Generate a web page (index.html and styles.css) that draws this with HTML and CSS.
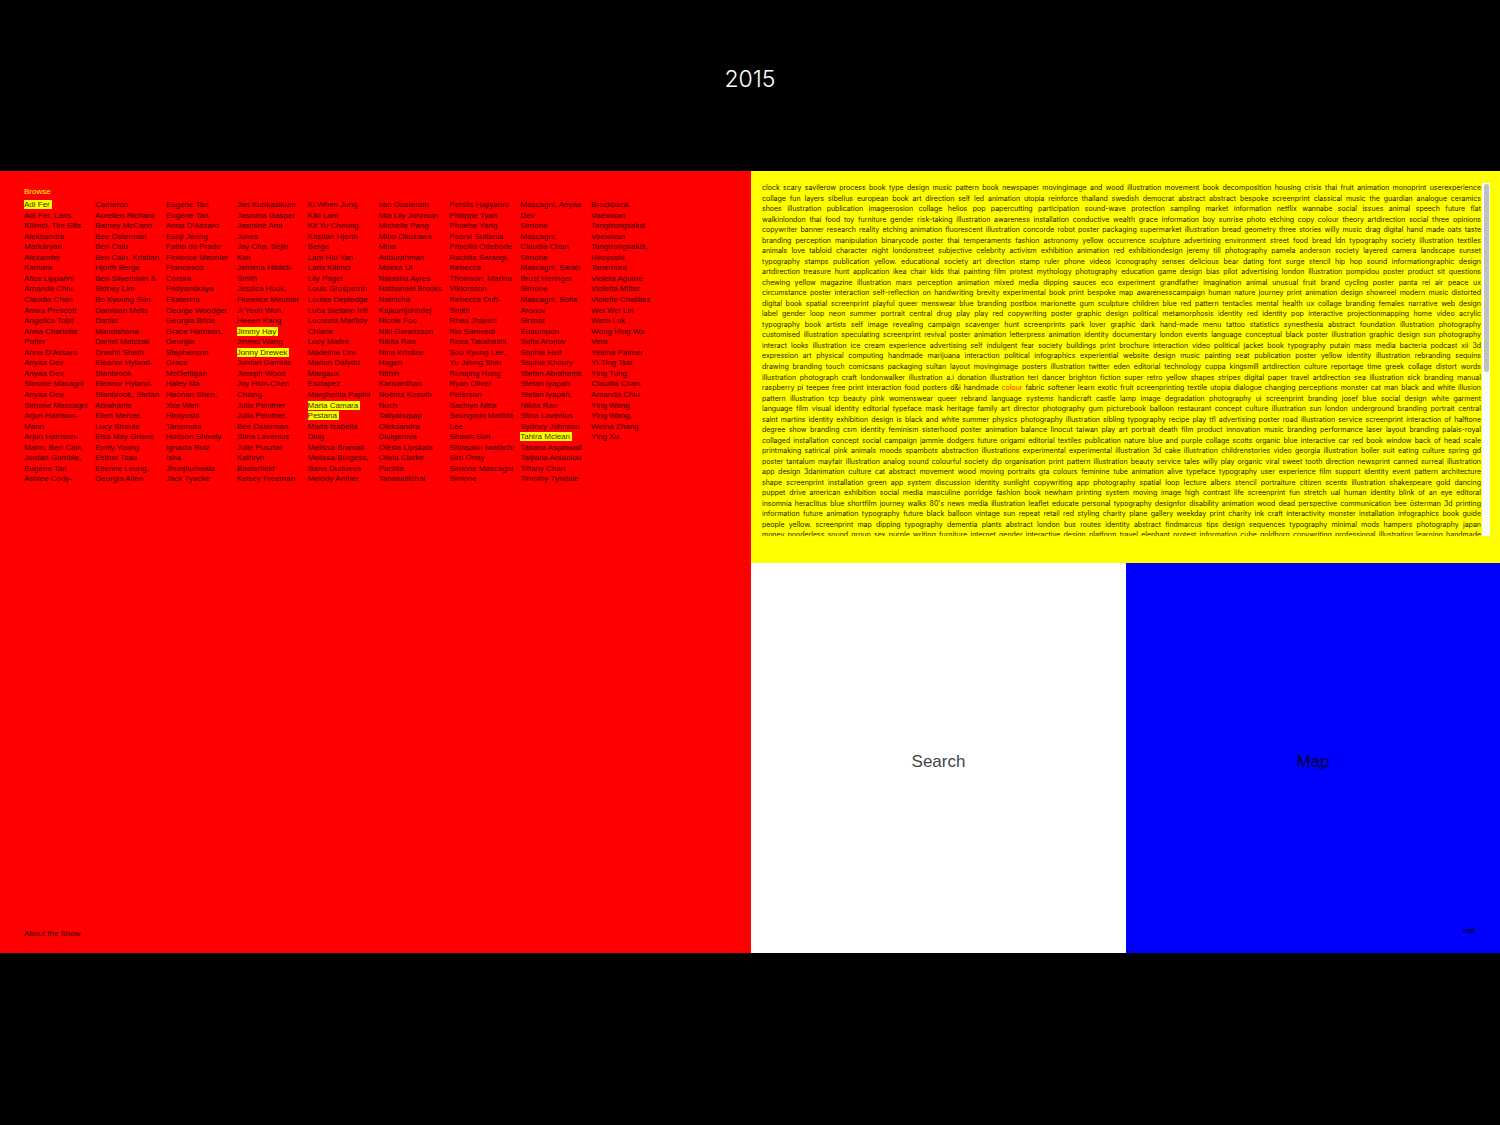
FILE: index.html
```html
<!DOCTYPE html>
<html lang="en">
<head>
<meta charset="utf-8">
<meta name="viewport" content="width=device-width, initial-scale=1">
<title>2015</title>
<link rel="stylesheet" href="styles.css">
</head>
<body>
<header class="year"><h1>2015</h1></header>
<main class="board">
<section class="browse">
<h2 class="browse-title"><a href="#browse">Browse</a></h2>
<div class="names">
<ul>
<li><mark>Adi Fer</mark></li><li>Adi Fer, Laris</li><li>Kilimci, Tim Ellis</li><li>Aleksandra</li><li>Markaryan</li><li>Alexander</li><li>Kamara</li><li>Alice Lipparini</li><li>Amanda Chiu,</li><li>Claudia Chan</li><li>Amira Prescott</li><li>Angelica Tobit</li><li>Anna Charlotte</li><li>Potter</li><li>Anna D'Assaro</li><li>Anyaa Dev</li><li>Anyaa Dev,</li><li>Simone Macagni</li><li>Anyaa Dev,</li><li>Simone Mascagni</li><li>Arjun Harrison-</li><li>Mann</li><li>Arjun Harrison-</li><li>Mann, Ben Cain,</li><li>Jordan Gamble,</li><li>Eugene Tan</li><li>Ashlee Cody-</li>
</ul>
<ul>
<li>Cameron</li><li>Aurelien Richard</li><li>Barney McCann</li><li>Bee Österman</li><li>Ben Cain</li><li>Ben Cain, Kristian</li><li>Hjorth Berge</li><li>Ben Silvertown &amp;</li><li>Sidney Lim</li><li>Bo Kyoung Son</li><li>Damiaan Melis</li><li>Daniel</li><li>Mandishona</li><li>Daniel Matczak</li><li>Drashti Sheth</li><li>Eleanor Hyland-</li><li>Stanbrook</li><li>Eleanor Hyland-</li><li>Stanbrook, Stefan</li><li>Abrahams</li><li>Ellen Mercer,</li><li>Lucy Streule</li><li>Elsa May Grieve</li><li>Emily Young</li><li>Esther Tsao</li><li>Etienne Leung,</li><li>Georgia Allen</li>
</ul>
<ul>
<li>Eugene Tan</li><li>Eugene Tan,</li><li>Anna D'Assaro</li><li>Eunji Jeong</li><li>Fabio do Prado</li><li>Florence Meunier</li><li>Francesco</li><li>Corsini</li><li>Fridyanskaya</li><li>Ekaterina</li><li>George Woodger</li><li>Georgia Bride</li><li>Grace Harrison,</li><li>Georgia</li><li>Stephenson</li><li>Grace</li><li>McGettigan</li><li>Haley Ma</li><li>Haonan Shen,</li><li>Xue Wen</li><li>Hiroyoshi</li><li>Tanemura</li><li>Hudson Shively</li><li>Ignacia Ruiz</li><li>Isha</li><li>Jhunjhunwala</li><li>Jack Tyacke</li>
</ul>
<ul>
<li>Jan Kunkasikum</li><li>Jasmina Gasper</li><li>Jasmine Ami</li><li>Jones</li><li>Jay Cha, Sejin</li><li>Kim</li><li>Jemima Hildick-</li><li>Smith</li><li>Jessica Hook,</li><li>Florence Meunier</li><li>Ji Yeon Won,</li><li>Heeen Kang</li><li><mark>Jimmy Hay</mark></li><li>Jinmei Wang</li><li><mark>Jonny Drewek</mark></li><li>Jordan Gamble</li><li>Joseph Wood</li><li>Joy Hsin-Chen</li><li>Chiang</li><li>Julia Peintner</li><li>Julia Peintner,</li><li>Bee Österman,</li><li>Stina Lavenius</li><li>Julie Pusztai</li><li>Kathryn</li><li>Basterfield</li><li>Kelsey Freeman</li>
</ul>
<ul>
<li>Ki When Jung</li><li>Kiki Lam</li><li>Kit Yu Cheung</li><li>Kristian Hjorth</li><li>Berge</li><li>Lam Hiu Yan</li><li>Laris Kilimci</li><li>Lily Paget</li><li>Louis Grosperrin</li><li>Louise Depledge</li><li>Luca Stefano Iriti</li><li>Lucrezia Marilidy</li><li>Chiarle</li><li>Lucy Maitre</li><li>Madeline Lim</li><li>Manon Dafydd</li><li>Margaux</li><li>Esclapez</li><li>Margherita Papini</li><li><mark>Maria Camara</mark></li><li><mark>Pestana</mark></li><li>Maria Isabella</li><li>Ding</li><li>Melissa Bramall</li><li>Melissa Burgess,</li><li>Iliana Dudueva</li><li>Melody Amber</li>
</ul>
<ul>
<li>van Oosterom</li><li>Mia Lily Johnson</li><li>Michelle Pang</li><li>Miho Okuzawa</li><li>Mina</li><li>Adburahman</li><li>Moeka Ui</li><li>Natasha Ayres</li><li>Nathanael Brooks</li><li>Natnicha</li><li>Kajkumjohndej</li><li>Nicole Foo</li><li>Niki Goransson</li><li>Nikita Rao</li><li>Nina Kristine</li><li>Hagen</li><li>Nithin</li><li>Karivardhan</li><li>Noëma Kosuth</li><li>Nuch</li><li>Tatiyanupap</li><li>Oleksandra</li><li>Diulgerova</li><li>Olesia Lipskaia</li><li>Olivia Clarke</li><li>Pantita</li><li>Tanasatitchai</li>
</ul>
<ul>
<li>Persiis Hajiyanni</li><li>Philippe Tyan</li><li>Phoebe Yang</li><li>Poorvi Sultania</li><li>Priscilla Odebode</li><li>Rachita Saraogi,</li><li>Rebecca</li><li>Thomson, Marina</li><li>Viktorsson</li><li>Rebecca Duff-</li><li>Smith</li><li>Rhea Jhaveri</li><li>Ria Samvedi</li><li>Rosa Takahashi,</li><li>Soo Kyung Lee,</li><li>Yu Jeong Shin</li><li>Runqing Hong</li><li>Ryan Oliver</li><li>Peterson</li><li>Sachiyo Nitta</li><li>Seungmin Matilda</li><li>Lee</li><li>Shawn Soh</li><li>Shinsaku Iwatachi</li><li>Sim Onay</li><li>Simone Mascagni</li><li>Simone</li>
</ul>
<ul>
<li>Mascagni, Anyaa</li><li>Dev</li><li>Simone</li><li>Mascagni,</li><li>Claudia Chan</li><li>Simone</li><li>Mascagni, Sarah</li><li>Brust Heringer</li><li>Simone</li><li>Mascagni, Sofia</li><li>Aronov</li><li>Sininat</li><li>Euaumpon</li><li>Sofia Aronov</li><li>Sophie Helf</li><li>Sophie Khoury</li><li>Stefan Abrahams</li><li>Stefan Iyapah</li><li>Stefan Iyapah,</li><li>Nikita Rao</li><li>Stina Lavenius</li><li>Sydney Johnson</li><li><mark>Tahira Mclean</mark></li><li>Tatiana Aspinwall</li><li>Tatjiana Antoniou</li><li>Tiffany Chan</li><li>Timothy Tyndale</li>
</ul>
<ul>
<li>Brockbank</li><li>Vaewwan</li><li>Tangtrongsakdi</li><li>Vaewwan</li><li>Tangtrongsakdi,</li><li>Hiroyoshi</li><li>Tanemura</li><li>Violeta Aguirre</li><li>Violetta Mitter</li><li>Violette Chatillez</li><li>Wei Wei Lin</li><li>Wern Luk</li><li>Wong Hing Wa</li><li>Vera</li><li>Yelena Palmer</li><li>Yi-Ting Tsai</li><li>Ying Tung</li><li>Claudia Chan,</li><li>Amanda Chiu</li><li>Ying Wang</li><li>Ying Wang,</li><li>Weina Zhang</li><li>Ying Xu</li>
</ul>
</div>
<a class="about" href="#about">About the Show</a>
</section>
<section class="tags">
<div class="tag-view">
<div class="tag-lines">
<p>clock scary savilerow process book type design music pattern book newspaper movingimage and wood illustration movement book decomposition housing crisis thai fruit animation monoprint userexperience</p>
<p>collage fun layers sibelius european book art direction self led animation utopia reinforce thailand swedish democrat abstract abstract bespoke screenprint classical music the guardian analogue ceramics</p>
<p>shoes illustration publication imageerosion collage helios pop papercutting participation sound-wave protection sampling market information netflix wannabe social issues animal speech future flat</p>
<p>walkinlondon thai food toy furniture gender risk-taking illustration awareness installation conductive wealth grace information boy sunrise photo etching copy colour theory artdirection social three opinions</p>
<p>copywriter banner research reality etching animation fluorescent illustration concorde robot poster packaging supermarket illustration bread geometry three stories willy music drag digital hand made oats taste</p>
<p>branding perception manipulation binarycode poster thai temperaments fashion astronomy yellow occurrence sculpture advertising environment street food bread ldn typography society illustration textiles</p>
<p>animals love tabloid character night londonstreet subjective celebrity activism exhibition animation red exhibitiondesign jeremy till photography pamela anderson society layered camera landscape sunset</p>
<p>typography stamps publication yellow. educational society art direction stamp ruler phone videos iconography senses delicious bear dating font surge stencil hip hop sound informationgraphic design</p>
<p>artdirection treasure hunt application ikea chair kids thai painting film protest mythology photography education game design bias pilot advertising london illustration pompidou poster product sit questions</p>
<p>chewing yellow magazine illustration mars perception animation mixed media dipping sauces eco experiment grandfather imagination animal unusual fruit brand cycling poster panta rei air peace ux</p>
<p>circumstance poster interaction self-reflection on handwriting brevity experimental book print bespoke map awarenesscampaign human nature journey print animation design showreel modern music distorted</p>
<p>digital book spatial screenprint playful queer menswear blue branding postbox marionette gum sculpture children blue red pattern tentacles mental health ux collage branding females narrative web design</p>
<p>label gender loop neon summer portrait central drug play play red copywriting poster graphic design political metamorphosis identity red identity pop interactive projectionmapping home video acrylic</p>
<p>typography book artists self image revealing campaign scavenger hunt screenprints park lover graphic dark hand-made menu tattoo statistics synesthesia abstract foundation illustration photography</p>
<p>customised illustration speculating screenprint revival poster animation letterpress animation identity documentary london events language conceptual black poster illustration graphic design sun photography</p>
<p>interact looks illustration ice cream experience advertising self indulgent fear society buildings print brochure interaction video political jacket book typography putain mass media bacteria podcast xii 3d</p>
<p>expression art physical computing handmade marijuana interaction political infographics experiential website design music painting seat publication poster yellow identity illustration rebranding sequins</p>
<p>drawing branding touch comicsans packaging sultan layout movingimage posters illustration twitter eden editorial technology cuppa kingsmill artdirection culture reportage time greek collage distort words</p>
<p>illustration photograph craft londonwalker illustration a.i donation illustration teri dancer brighton fiction super retro yellow shapes stripes digital paper travel artdirection sea illustration sick branding manual</p>
<p>raspberry pi teepee free print interaction food posters d&amp;i handmade <a class="current" href="#colour">colour</a> fabric softener learn exotic fruit screenprinting textile utopia dialogue changing perceptions monster cat man black and white illusion</p>
<p>pattern illustration tcp beauty pink womenswear queer rebrand language systems handicraft castle lamp image degradation photography ui screenprint branding josef blue social design white garment</p>
<p>language film visual identity editorial typeface mask heritage family art director photography gum picturebook balloon restaurant concept culture illustration sun london underground branding portrait central</p>
<p>saint martins identity exhibition design is black and white summer physics photography illustration sibling typography recipe play tfl advertising poster road illustration service screenprint interaction of halftone</p>
<p>degree show branding csm identity feminism sisterhood poster animation balance linocut taiwan play art portrait death film product innovation music branding performance laser layout branding palais-royal</p>
<p>collaged installation concept social campaign jammie dodgers future origami editorial textiles publication nature blue and purple collage scotts organic blue interactive car red book window back of head scale</p>
<p>printmaking satirical pink animals moods spambots abstraction illustrations experimental experimental illustration 3d cake illustration childrenstories video georgia illustration boiler suit eating culture spring gd</p>
<p>poster tantalum mayfair illustration analog sound colourful society dip organisation print pattern illustration beauty service tales willy play organic viral sweet tooth direction newsprint canned surreal illustration</p>
<p>app design 3danimation culture cat abstract movement wood moving portraits gta colours feminine tube animation alive typeface typography user experience film support identity event pattern architecture</p>
<p>shape screenprint installation green app system discussion identity sunlight copywriting app photography spatial loop lecture albers stencil portraiture citizen scents illustration shakespeare gold dancing</p>
<p>puppet drive american exhibition social media masculine porridge fashion book newham printing system moving image high contrast life screenprint fun stretch ual human identity blink of an eye editoral</p>
<p>insomnia heraclitus blue shortfilm journey walks 80's news media illustration leaflet educate personal typography designfor disability animation wood dead perspective communication bee österman 3d printing</p>
<p>information future animation typography future black balloon vintage sun repeat retail red styling charity plane gallery weekday print charity ink craft interactivity monster installation infographics book guide</p>
<p>people yellow. screenprint map dipping typography dementia plants abstract london bus routes identity abstract findmarcus tips design sequences typography minimal mods hampers photography japan</p>
<p>money ponderless sound group sex purple writing furniture internet gender interactive design platform travel elephant protest information cube goldhorn copywriting professional illustration learning handmade</p>
</div>
<div class="track"><div class="thumb"></div></div>
</div>
</section>
<a class="tile search" href="#search">Search</a>
<section class="map">
<a class="tile" href="#map">Map</a>
<a class="ual" href="#ual">ual:</a>
</section>
</main>
</body>
</html>
```

FILE: styles.css
```css
* {
  box-sizing: border-box;
}

body {
  margin: 0;
  background: #000;
  color: #000;
  font-family: "Liberation Sans", Arial, sans-serif;
  font-size: 8px;
  line-height: 10px;
}

h1,
h2,
p,
ul {
  margin: 0;
  padding: 0;
}

ul {
  list-style: none;
}

a {
  color: inherit;
  text-decoration: none;
}

.year {
  display: flex;
  justify-content: center;
  padding: 64px 0 77px;
  color: #fff;
}

.year h1 {
  font-family: Inter, "Liberation Sans", sans-serif;
  font-size: 23px;
  font-weight: 300;
  line-height: 30px;
}

.board {
  display: grid;
  grid-template-columns: 751fr 375fr 374fr;
  grid-template-rows: 392fr 390fr;
  aspect-ratio: 1500 / 782;
}

.browse {
  grid-row: 1 / 3;
  display: flex;
  flex-direction: column;
  padding: 16px 24px 14px;
  background: #f00;
  color: #300;
}

.browse-title {
  font-size: 8px;
  font-weight: 400;
  color: #ff0;
  margin-bottom: 3px;
}

.names {
  display: grid;
  grid-template-columns: repeat(9, minmax(0, 1fr));
  width: 638px;
  max-width: 100%;
  height: 285px;
}

.names ul {
  display: grid;
  grid-template-rows: repeat(27, 1fr);
  white-space: nowrap;
}

.names mark {
  background: #ff0;
  color: #330;
  padding-right: 2px;
}

.about {
  margin-top: auto;
}

.tags {
  grid-column: 2 / 4;
  padding: 12px 10px 27px 11px;
  background: #ff0;
  color: #220;
}

.tag-view {
  display: flex;
  height: 353px;
  overflow: hidden;
}

.tag-lines {
  flex: 1;
  display: grid;
  grid-template-rows: repeat(34, 1fr);
  height: 358px;
  min-width: 0;
  font-family: Inter, "Liberation Sans", sans-serif;
  font-size: 7px;
}

.tag-lines p {
  min-width: 0;
  white-space: nowrap;
  text-align: justify;
  text-align-last: justify;
}

.current {
  color: #f20;
}

.track {
  width: 8px;
  margin-left: 1px;
  background: #fafafa;
}

.thumb {
  width: 5px;
  height: 188px;
  margin: 1px 2px;
  border-radius: 3px;
  background: #c1c1c1;
}

.tile {
  display: flex;
  align-items: center;
  justify-content: center;
  padding-top: 8px;
  font-size: 17px;
  line-height: 20px;
}

.search {
  background: #fff;
  color: #444;
}

.map {
  display: grid;
  background: #00f;
  color: #003;
}

.map > * {
  grid-area: 1 / 1;
}

.ual {
  align-self: end;
  justify-self: end;
  margin: 0 23px 17px 0;
  font-weight: 700;
}
```
